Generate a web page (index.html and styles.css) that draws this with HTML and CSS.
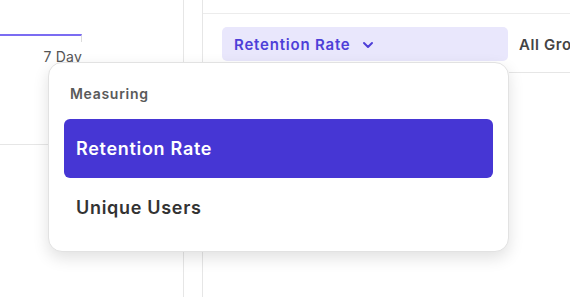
FILE: index.html
```html
<!DOCTYPE html>
<html lang="en">
<head>
    <meta charset="UTF-8">
    <meta name="viewport" content="width=device-width, initial-scale=1.0">
    <title>Measuring</title>
    <link rel="stylesheet" href="styles.css">
</head>
<body>
    <div class="layout">
        <div class="chart-pane">
            <div class="range">
                <div class="range-bar"></div>
                <span class="range-label">7 Day</span>
            </div>
            <div class="chart-rule"></div>
        </div>
        <div class="gutter"></div>
        <div class="main">
            <div class="main-header"></div>
            <div class="toolbar">
                <button class="metric-btn">
                    Retention Rate
                    <svg class="chevron" width="12" height="8" viewBox="0 0 12 8">
                        <path d="M2 2 L6 6 L10 2" fill="none" stroke="currentColor" stroke-width="2" stroke-linecap="round" stroke-linejoin="round"/>
                    </svg>
                </button>
                <span class="group-label">All Groups</span>
            </div>
            <div class="toolbar-rule"></div>
        </div>
    </div>

    <div class="menu">
        <div class="menu-title">Measuring</div>
        <div class="menu-item selected">Retention Rate</div>
        <div class="menu-item">Unique Users</div>
    </div>
</body>
</html>
```

FILE: styles.css
```css
body {
    margin: 0;
    font-family: Inter, "Noto Sans", sans-serif;
    background: #fff;
    width: 570px;
    height: 297px;
    overflow: hidden;
    position: relative;
}
.layout {
    display: grid;
    grid-template-columns: 184px 19px minmax(0, 1fr);
    height: 297px;
}
.chart-pane {
    border-right: 1px solid #e6e6e6;
}
.range {
    padding-top: 34px;
    width: 82px;
}
.range-bar {
    height: 8px;
    border-top: 2px solid #7b6cf2;
    border-right: 1px solid #dcdcdc;
    box-sizing: border-box;
}
.range-label {
    display: block;
    text-align: right;
    font-size: 14px;
    color: #555;
    margin-top: 6px;
    letter-spacing: 0.2px;
}
.chart-rule {
    margin-top: 79px;
    border-top: 1px solid #e6e6e6;
}
.gutter {
    border-right: 1px solid #e6e6e6;
}
.main {
    overflow: hidden;
}
.main-header {
    height: 13px;
    border-bottom: 1px solid #ececec;
}
.toolbar {
    display: flex;
    align-items: center;
    gap: 11px;
    padding: 13px 0 0 19px;
    white-space: nowrap;
    overflow: hidden;
}
.metric-btn {
    display: flex;
    align-items: center;
    gap: 11px;
    width: 286px;
    height: 34px;
    padding: 0 12px;
    border: none;
    border-radius: 5px;
    background: #e9e7fc;
    color: #4e3fd8;
    font-family: inherit;
    font-size: 15px;
    font-weight: 600;
    letter-spacing: 0.8px;
    flex-shrink: 0;
}
.chevron {
    margin-top: 2px;
}
.group-label {
    font-size: 15px;
    font-weight: 600;
    color: #444;
    letter-spacing: 0.6px;
}
.toolbar-rule {
    margin: 11px 0 0 306px;
    border-top: 1px solid #e6e6e6;
}
.menu {
    position: absolute;
    left: 48px;
    top: 62px;
    width: 461px;
    height: 190px;
    box-sizing: border-box;
    padding: 19px 15px 16px;
    background: #fff;
    border: 1px solid #e2e2e2;
    border-radius: 14px;
    box-shadow: 0 6px 16px rgba(0, 0, 0, 0.12);
}
.menu-title {
    font-size: 14px;
    font-weight: 600;
    color: #5a5a5a;
    padding-left: 6px;
    height: 24px;
    line-height: 24px;
    letter-spacing: 0.7px;
}
.menu-item {
    height: 59px;
    line-height: 59px;
    padding-left: 12px;
    border-radius: 6px;
    font-size: 18px;
    font-weight: 600;
    color: #333;
    letter-spacing: 0.7px;
}
.menu-title + .menu-item {
    margin-top: 13px;
}
.menu-item.selected {
    background: #4636d4;
    color: #fff;
}
```
